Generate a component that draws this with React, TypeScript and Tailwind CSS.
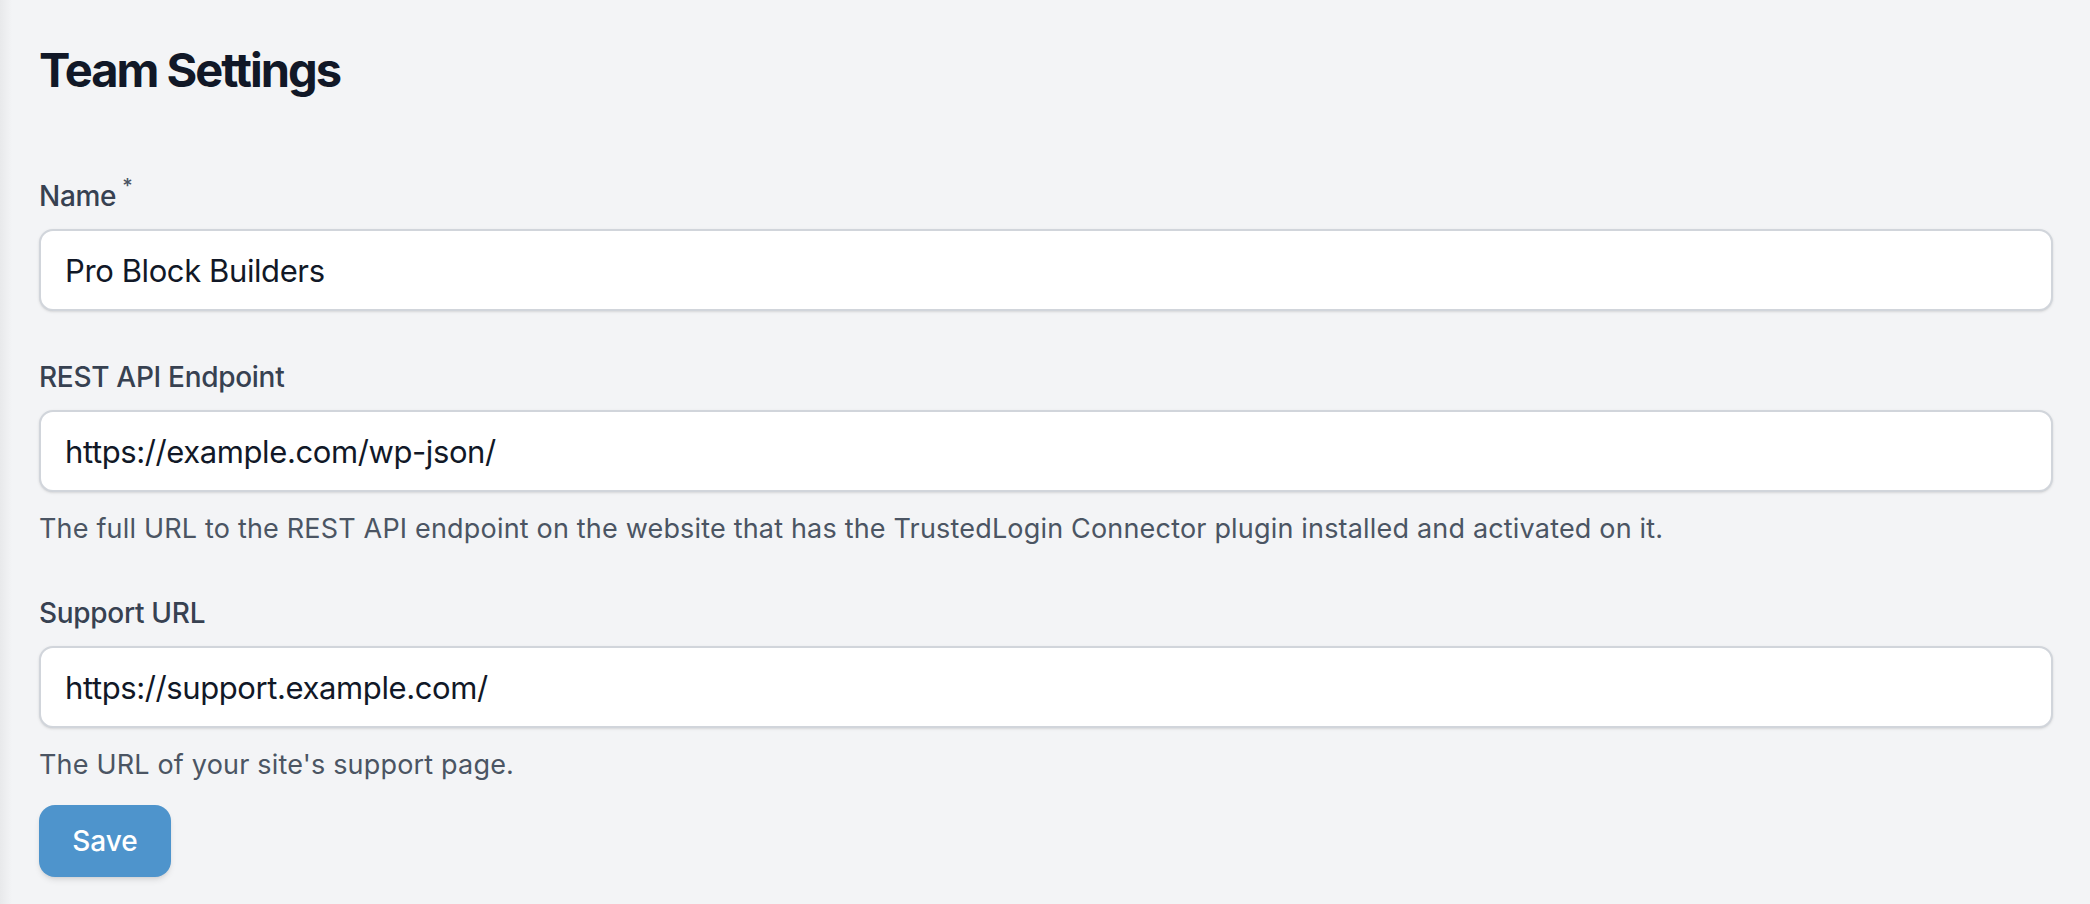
import React, { useState } from 'react';

function Field({
  label,
  value,
  required,
  help,
  onChange,
  className,
}: {
  label: string;
  value: string;
  required?: boolean;
  help?: string;
  onChange: (v: string) => void;
  className?: string;
}) {
  return (
    <div className={className}>
      <label className="block text-[28px] leading-[40px] font-[450] tracking-[-0.3px] text-[#374151]">
        {label}
        {required && <span className="ml-[6px] text-[20px] leading-none align-top text-[#4b5563]">*</span>}
      </label>
      <input
        type="text"
        value={value}
        onChange={(e) => onChange(e.target.value)}
        className="mt-[13px] block w-full h-[82px] rounded-[14px] border-2 border-[#d1d5db] bg-white px-[24px] text-[31px] leading-[48px] tracking-[-0.4px] text-[#111827] shadow-sm outline-none"
      />
      {help && <p className="mt-[19px] text-[27px] leading-[36px] tracking-[0.18px] text-[#4b5563]">{help}</p>}
    </div>
  );
}

export default function App() {
  const [name, setName] = useState('Pro Block Builders');
  const [endpoint, setEndpoint] = useState('https://example.com/wp-json/');
  const [supportUrl, setSupportUrl] = useState('https://support.example.com/');

  return (
    <div className="min-h-screen flex bg-[#f3f4f6]" style={{ fontFamily: 'Inter, "Noto Sans", sans-serif' }}>
      <div className="w-[12px] shrink-0 bg-gradient-to-r from-[#e8e9eb] to-[#f3f4f6]" />
      <div className="flex-1 pl-[27px] pr-[37px] pt-[38px] pb-[28px]">
        <h1 className="text-[47px] leading-[64px] font-bold tracking-[-2px] text-[#111827]">Team Settings</h1>

        <form className="mt-[74px]" onSubmit={(e) => e.preventDefault()}>
          <Field label="Name" required value={name} onChange={setName} />
          <Field className="mt-[46px]" label="REST API Endpoint" value={endpoint} onChange={setEndpoint}
            help="The full URL to the REST API endpoint on the website that has the TrustedLogin Connector plugin installed and activated on it." />
          <Field className="mt-[46px]" label="Support URL" value={supportUrl} onChange={setSupportUrl}
            help="The URL of your site's support page." />

          <button type="submit" className="mt-[22px] w-[132px] h-[72px] rounded-[16px] bg-[#4e94cc] text-[28px] font-medium text-white shadow-md">
            Save
          </button>
        </form>
      </div>
    </div>
  );
}
